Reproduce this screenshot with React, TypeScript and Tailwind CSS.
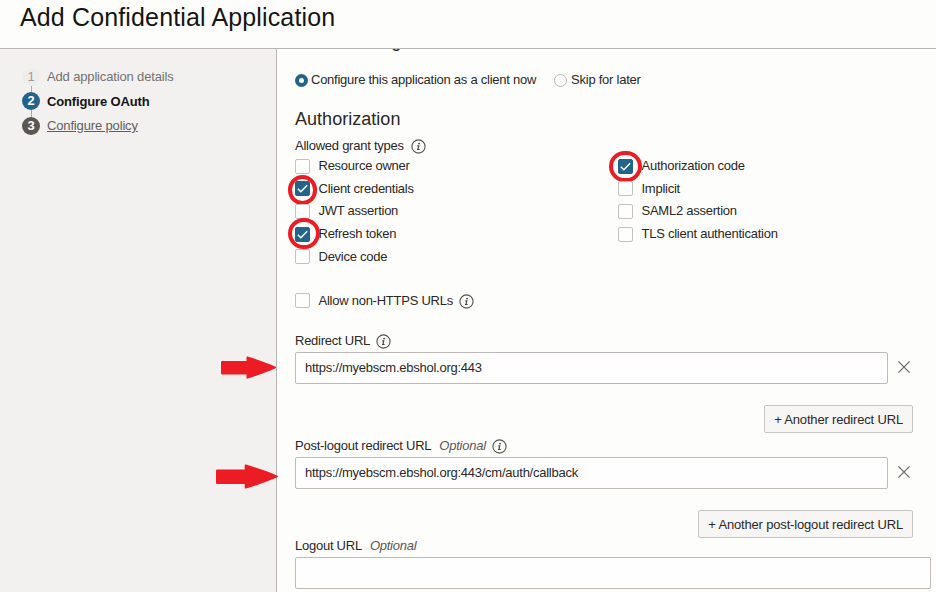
import type { ReactNode } from "react";

function InfoIcon({ className = "" }: { className?: string }) {
  return (
    <svg className={`shrink-0 ${className}`} width="15" height="15" viewBox="0 0 15 15" fill="none">
      <circle cx="7.5" cy="7.5" r="6.6" stroke="#55504d" strokeWidth="1.1" />
      <circle cx="8.1" cy="4.6" r="0.95" fill="#4a4644" />
      <path d="M6.3 6.9H7.7L7 10.4M6 10.5H8.7" stroke="#4a4644" strokeWidth="1.2" />
    </svg>
  );
}

function Ring({ className }: { className: string }) {
  return <span className={`absolute rounded-full border-4 border-[#ed1c24] ${className}`} />;
}

function Check({ label, on, ring }: { label: string; on?: boolean; ring?: string }) {
  return (
    <div className="relative flex h-[22.6px] items-center">
      <span
        className={`flex size-[15px] shrink-0 items-center justify-center rounded-[2px] border ${
          on ? "border-[#22648a] bg-[#22648a]" : "border-[#c6c1be] bg-[#fefefe]"
        }`}
      >
        {on && (
          <svg className="shrink-0" width="13" height="13" viewBox="0 0 13 13" fill="none">
            <path d="M1.8 6.8L4.8 9.7L11.2 3.2" stroke="#fff" strokeWidth="1.4" />
          </svg>
        )}
      </span>
      <span className="ml-[8.5px] whitespace-nowrap">{label}</span>
      {ring && <Ring className={ring} />}
    </div>
  );
}

function Field({ value, className = "" }: { value?: string; className?: string }) {
  return (
    <div className={`flex h-[32px] items-center rounded-[2px] border border-[#bfbab7] bg-[#fefefe] pl-[9px] ${className}`}>
      {value}
    </div>
  );
}

function CloseIcon() {
  return (
    <svg className="mb-[2px] ml-[10px] shrink-0" width="12" height="12" viewBox="0 0 12 12" fill="none">
      <path d="M0.4 0.4L11.6 11.6M11.6 0.4L0.4 11.6" stroke="#6b6765" strokeWidth="1.2" />
    </svg>
  );
}

function Button({ children }: { children: ReactNode }) {
  return (
    <div className="mr-[23px] flex justify-end">
      <button className="flex h-[28px] items-center whitespace-nowrap rounded-[2px] border border-[#c9c5c2] bg-[#f7f6f5] px-[9px] pt-px tracking-[-0.17px]">
        {children}
      </button>
    </div>
  );
}

function Step({ n, label, circle, text }: { n: number; label: string; circle: string; text: string }) {
  return (
    <li className="flex h-[18px] items-center tracking-[-0.15px]">
      <span className={`flex size-[18px] items-center justify-center rounded-full ${circle}`}>{n}</span>
      <span className={`ml-[7px] ${text}`}>{label}</span>
    </li>
  );
}

function Arrow({ className, width, height }: { className: string; width: number; height: number }) {
  return (
    <svg className={`absolute ${className}`} width={width} height={height} viewBox="0 0 56 23" preserveAspectRatio="none">
      <path
        d="M1 5H25.5V1.2Q25.5 .3 26.6 .5C36 3.5 46 7 54.5 10.7Q56 11.5 54.5 12.2C46 16 36 19.5 26.6 22.6Q25.5 22.8 25.5 21.8V18.5H1Q0 18.5 0 17.5V6Q0 5 1 5Z"
        fill="#ed1c24"
      />
    </svg>
  );
}

export default function App() {
  return (
    <div className="relative flex h-[592px] w-[936px] flex-col overflow-hidden bg-[#fdfdfb] font-['Liberation_Sans',Arial,sans-serif] text-[13px] leading-[18px] tracking-[-0.25px] text-[#2b2826]">
      <header className="h-[49px] shrink-0 border-b border-[#b9b6b2] pl-[20px]">
        <h1 className="whitespace-nowrap text-[25px] leading-[34px] tracking-[0.14px] text-[#161513]">
          Add Confidential Application
        </h1>
      </header>
      <div className="flex min-h-0 flex-1">
        <aside className="w-[277px] shrink-0 border-r border-[#b9b6b2] bg-[#f2f1f0] pl-[22px] pt-[19px]">
          <ol>
            <Step n={1} label="Add application details" circle="bg-[#eeedec] text-[#a09d9b]" text="text-[#75716f]" />
            <li className="ml-[9px] h-[6px] w-px bg-[#aaa7a5]" />
            <Step n={2} label="Configure OAuth" circle="bg-[#22648a] font-bold text-white" text="pt-px font-bold text-[#161513]" />
            <li className="ml-[9px] h-[7px] w-px bg-[#aaa7a5]" />
            <Step n={3} label="Configure policy" circle="bg-[#5b5652] font-bold text-white" text="text-[#625e5b] underline" />
          </ol>
        </aside>
        <main className="flex min-w-0 flex-1 flex-col pl-[18px]">
          <div className="flex h-[4px] shrink-0 items-end overflow-hidden">
            <h2 className="mb-[1px] text-[18px] leading-[22px] tracking-[0.6px]">Client configuration</h2>
          </div>
          <div className="mt-[16px] flex h-[22px] shrink-0 items-center">
            <span className="size-[13px] rounded-full border-[4.5px] border-[#22648a] bg-white" />
            <span className="ml-[3px]">Configure this application as a client now</span>
            <span className="ml-[18px] size-[13px] rounded-full border border-[#bdb8b5] bg-white" />
            <span className="ml-[4px]">Skip for later</span>
          </div>
          <h2 className="mt-[16px] h-[24px] shrink-0 text-[18px] leading-[24px] tracking-[0.03px]">Authorization</h2>
          <div className="mt-[6px] flex h-[18px] shrink-0 items-center">
            Allowed grant types
            <InfoIcon className="ml-[7px]" />
          </div>
          <div className="grid h-[113px] shrink-0 grid-cols-[323px_1fr]">
            <div>
              <Check label="Resource owner" />
              <Check label="Client credentials" on ring="-left-[7px] -top-[3px] h-[30px] w-[29px]" />
              <Check label="JWT assertion" />
              <Check label="Refresh token" on ring="-left-[7px] -top-[5px] h-[31px] w-[32px]" />
              <Check label="Device code" />
            </div>
            <div>
              <Check label="Authorization code" on ring="-left-[9px] -top-[4px] h-[31px] w-[33px]" />
              <Check label="Implicit" />
              <Check label="SAML2 assertion" />
              <Check label="TLS client authentication" />
            </div>
          </div>
          <div className="mb-[1px] mt-[21px] flex h-[23px] shrink-0 items-center">
            <Check label="Allow non-HTTPS URLs" />
            <InfoIcon className="ml-[6px] mt-px" />
          </div>
          <div className="mt-[18px] flex h-[20px] shrink-0 items-center">
            Redirect URL
            <InfoIcon className="ml-[6px]" />
          </div>
          <div className="mb-[21px] mt-[1px] flex shrink-0 items-center">
            <Field value="https://myebscm.ebshol.org:443" className="w-[593px]" />
            <CloseIcon />
          </div>
          <Button>+ Another redirect URL</Button>
          <div className="mt-[3px] flex h-[20px] shrink-0 items-center">
            Post-logout redirect URL
            <em className="ml-[8px] text-[#5b5652]">Optional</em>
            <InfoIcon className="ml-[6px]" />
          </div>
          <div className="mb-[21px] mt-[1px] flex shrink-0 items-center">
            <Field value="https://myebscm.ebshol.org:443/cm/auth/callback" className="w-[593px]" />
            <CloseIcon />
          </div>
          <Button>+ Another post-logout redirect URL</Button>
          <div className="flex h-[16px] shrink-0 items-center">
            Logout URL
            <em className="ml-[8px] text-[#5b5652]">Optional</em>
          </div>
          <Field className="mt-[3px] w-[636px] shrink-0" />
        </main>
      </div>
      <Arrow className="left-[221px] top-[356px]" width={56} height={23} />
      <Arrow className="left-[216px] top-[464px]" width={63} height={25} />
    </div>
  );
}
